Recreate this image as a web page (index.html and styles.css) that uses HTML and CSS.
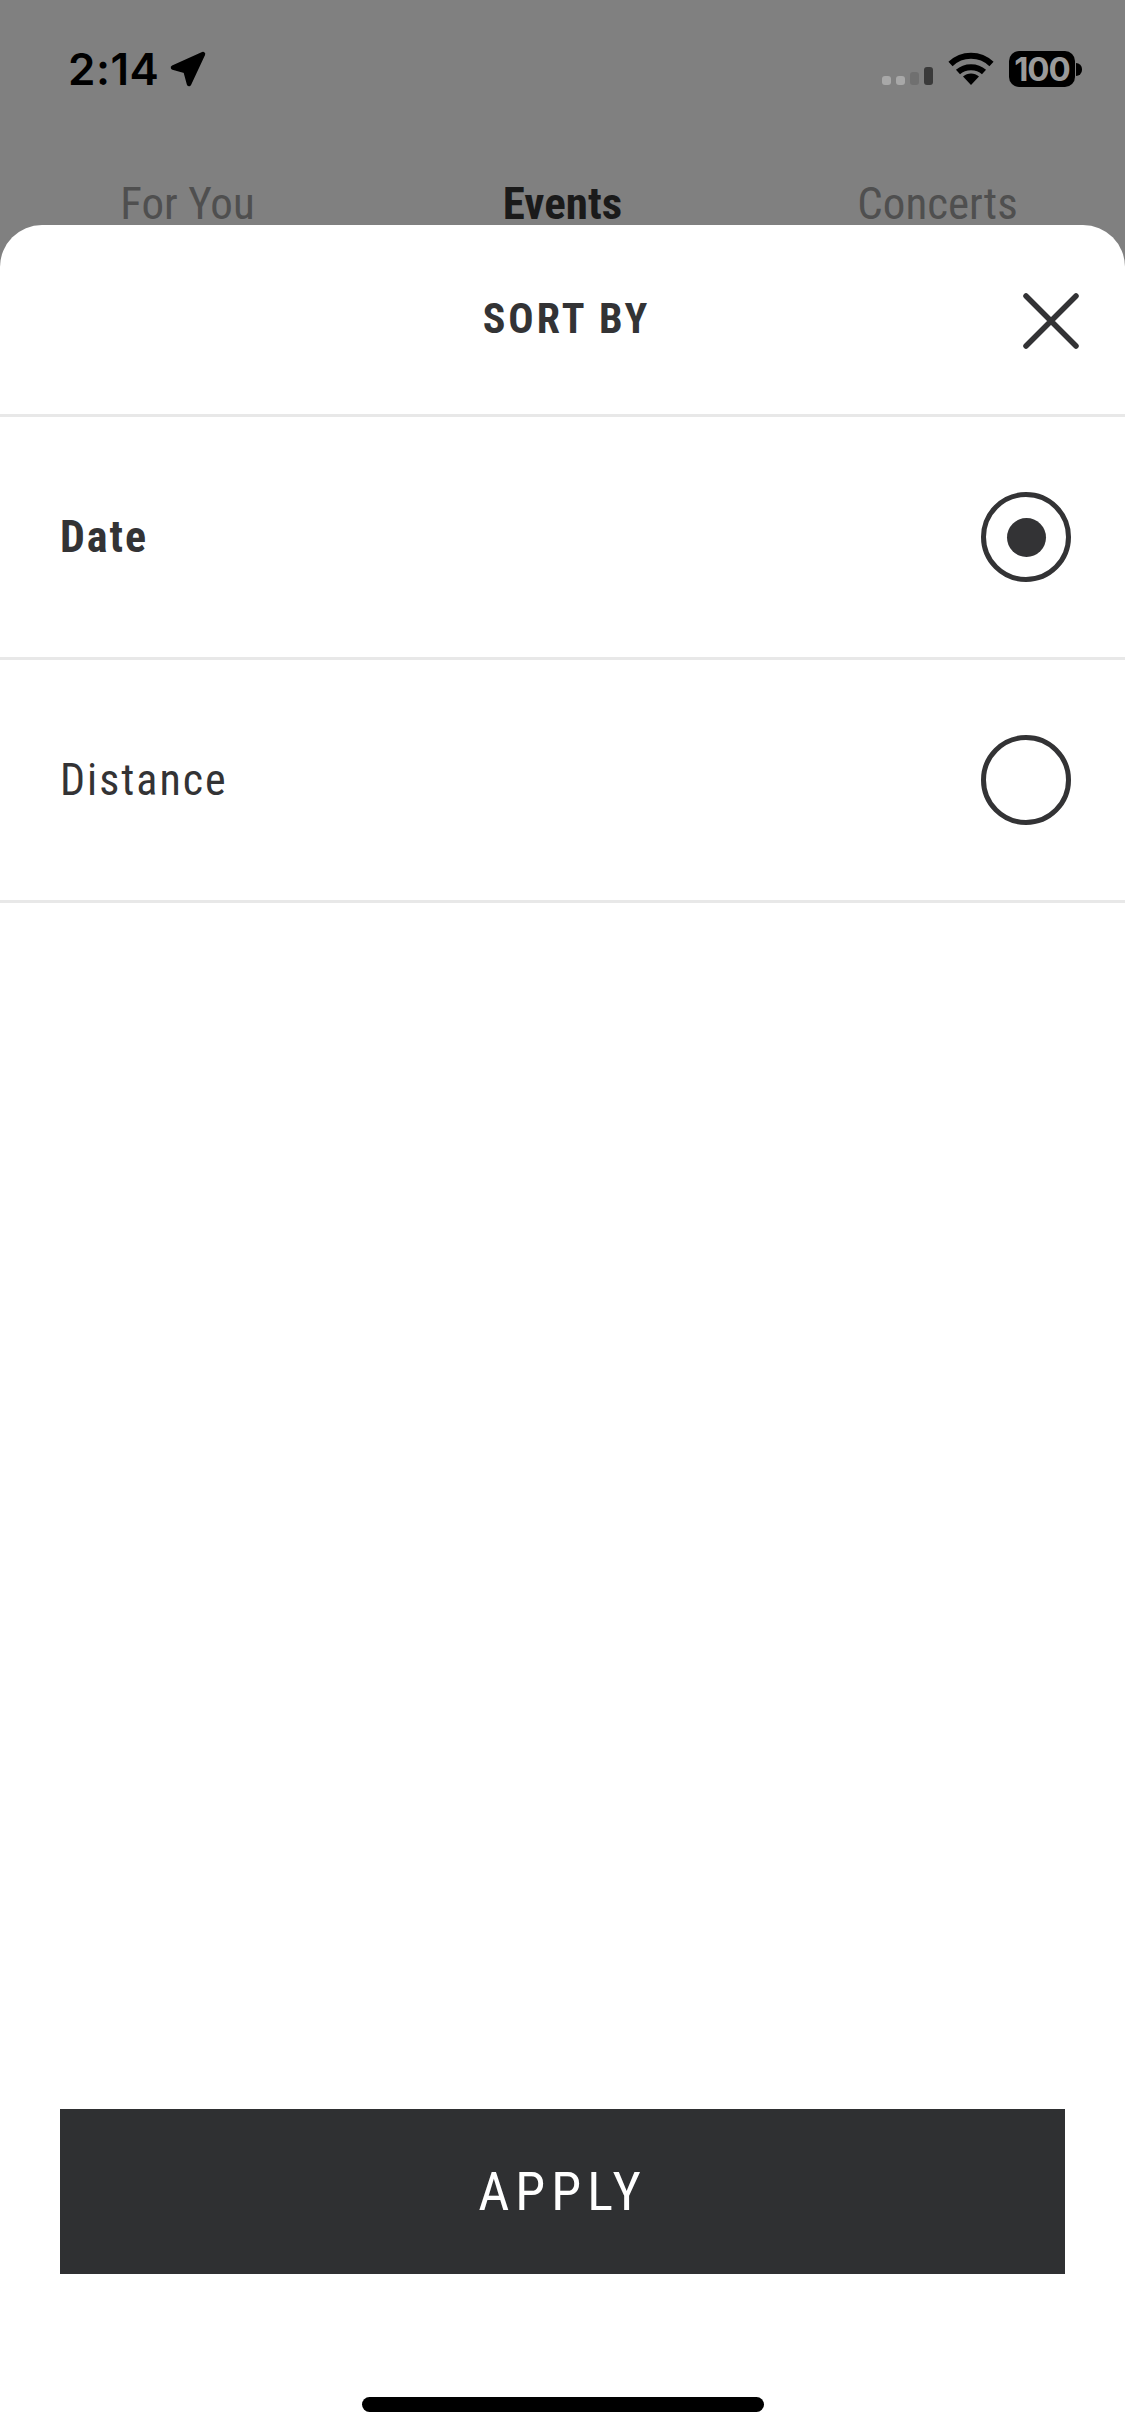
FILE: index.html
```html
<!DOCTYPE html>
<html>
<head>
  <meta charset="UTF-8" />
  <title>Sort by</title>
  <link rel="stylesheet" href="styles.css">
</head>
<body>

<div id="screen">
  <!-- Dimmed page behind the sheet -->
  <div class="status-bar">
    <div class="status-left">
      <span class="time">2:14</span>
      <svg class="location" width="36" height="36" viewBox="0 0 36 36">
        <path d="M33 3 L3 16.500 L15.500 20 L19 33 Z" fill="#000" stroke="#000" stroke-width="4.500" stroke-linejoin="round"/>
      </svg>
    </div>
    <div class="status-right">
      <div class="signal">
        <span class="bar bar-1"></span>
        <span class="bar bar-2"></span>
        <span class="bar bar-3"></span>
        <span class="bar bar-4"></span>
      </div>
      <svg class="wifi" width="46" height="34" viewBox="0 0 46 34">
        <path d="M2.500 12 C14 1 32 1 43.500 12" fill="none" stroke="#000" stroke-width="6"/>
        <path d="M10 20 C17 13.500 29 13.500 36 20" fill="none" stroke="#000" stroke-width="6"/>
        <path d="M15 24.500 C19.500 20.500 26.500 20.500 31 24.500 L23 33 Z" fill="#000"/>
      </svg>
      <div class="battery">
        <span class="battery-body">100</span>
        <span class="battery-nub"></span>
      </div>
    </div>
  </div>

  <div class="tabs">
    <span class="tab">For You</span>
    <span class="tab tab-active">Events</span>
    <span class="tab">Concerts</span>
  </div>

  <!-- Bottom sheet -->
  <div class="sheet">
    <div class="sheet-header">
      <h2 class="sheet-title">SORT BY</h2>
      <svg class="close" width="60" height="60" viewBox="0 0 60 60">
        <path d="M5 5 L55 55 M55 5 L5 55" fill="none" stroke="#333335" stroke-width="5.500" stroke-linecap="round"/>
      </svg>
    </div>

    <div class="option">
      <span class="option-label option-selected">Date</span>
      <span class="radio"><span class="radio-dot"></span></span>
    </div>
    <div class="option">
      <span class="option-label">Distance</span>
      <span class="radio"></span>
    </div>

    <div class="sheet-footer">
      <button class="apply">APPLY</button>
      <div class="home-bar"></div>
    </div>
  </div>
</div>

</body>
</html>
```

FILE: styles.css
```css
* {
  box-sizing: border-box;
}

body {
  margin: 0;
  font-family: Roboto, "Liberation Sans", sans-serif;
  font-stretch: condensed;
}

#screen {
  position: relative;
  width: 1125px;
  height: 2436px;
  overflow: hidden;
  background-color: #808080;
}

.status-bar {
  display: flex;
  justify-content: space-between;
  align-items: center;
  height: 36px;
  margin-top: 51px;
  padding: 0 43px 0 68px;
}

.status-left {
  display: flex;
  align-items: center;
  gap: 11px;
}

.time {
  font-family: Inter, sans-serif;
  font-size: 44px;
  font-weight: 600;
  letter-spacing: 0.5px;
  color: #000;
}

.status-right {
  display: flex;
  align-items: center;
}

.signal {
  display: flex;
  align-items: flex-end;
  gap: 5px;
  height: 18px;
  margin-top: 14px;
  margin-right: 15px;
}

.bar {
  width: 9px;
  border-radius: 3px;
}

.bar-1, .bar-2 {
  height: 9px;
  background-color: #a8a8a8;
}

.bar-3 {
  height: 13px;
  background-color: #707070;
}

.bar-4 {
  height: 18px;
  background-color: #3a3a3a;
}

.battery {
  display: flex;
  align-items: center;
  margin-left: 15px;
}

.battery-body {
  width: 66px;
  height: 36px;
  border-radius: 10px;
  background-color: #000;
  color: #9a9a9a;
  font-family: Inter, sans-serif;
  font-size: 33px;
  font-weight: 700;
  letter-spacing: -1px;
  line-height: 36px;
  text-align: center;
}

.battery-nub {
  width: 6px;
  height: 13px;
  margin-left: 1px;
  border-radius: 0 6px 6px 0;
  background-color: #000;
}

.tabs {
  display: flex;
  justify-content: space-between;
  margin-top: 93px;
}

.tab {
  width: 375px;
  text-align: center;
  font-size: 45px;
  line-height: 48px;
  color: #4f4f4f;
}

.tab-active {
  font-weight: 700;
  color: #1a1a1a;
}

.sheet {
  position: absolute;
  top: 225px;
  left: 0;
  right: 0;
  bottom: 0;
  display: flex;
  flex-direction: column;
  background-color: #fff;
  border-radius: 42px 42px 0 0;
}

.sheet-header {
  position: relative;
  display: flex;
  justify-content: center;
  align-items: center;
  height: 192px;
  padding-bottom: 2px;
  border-bottom: 3px solid #e8e8e8;
}

.sheet-title {
  margin: 0 0 0 8px;
  font-size: 42px;
  font-weight: 700;
  letter-spacing: 3px;
  color: #333335;
}

.close {
  position: absolute;
  top: 66px;
  right: 44px;
}

.option {
  display: flex;
  justify-content: space-between;
  align-items: center;
  height: 243px;
  padding: 0 54px 0 60px;
  border-bottom: 3px solid #e8e8e8;
}

.option-label {
  font-size: 44px;
  letter-spacing: 2px;
  color: #333335;
}

.option-selected {
  font-weight: 700;
}

.radio {
  display: flex;
  justify-content: center;
  align-items: center;
  width: 90px;
  height: 90px;
  border: 5.5px solid #333335;
  border-radius: 50%;
}

.radio-dot {
  width: 39px;
  height: 39px;
  border-radius: 50%;
  background-color: #333335;
}

.sheet-footer {
  display: flex;
  flex-direction: column;
  align-items: center;
  margin-top: auto;
}

.apply {
  width: 1005px;
  height: 165px;
  border: none;
  background-color: #2f3032;
  color: #fff;
  font-family: inherit;
  font-stretch: inherit;
  font-size: 54px;
  letter-spacing: 6px;
}

.home-bar {
  width: 402px;
  height: 15px;
  margin: 123px 0 24px;
  border-radius: 8px;
  background-color: #000;
}
```
